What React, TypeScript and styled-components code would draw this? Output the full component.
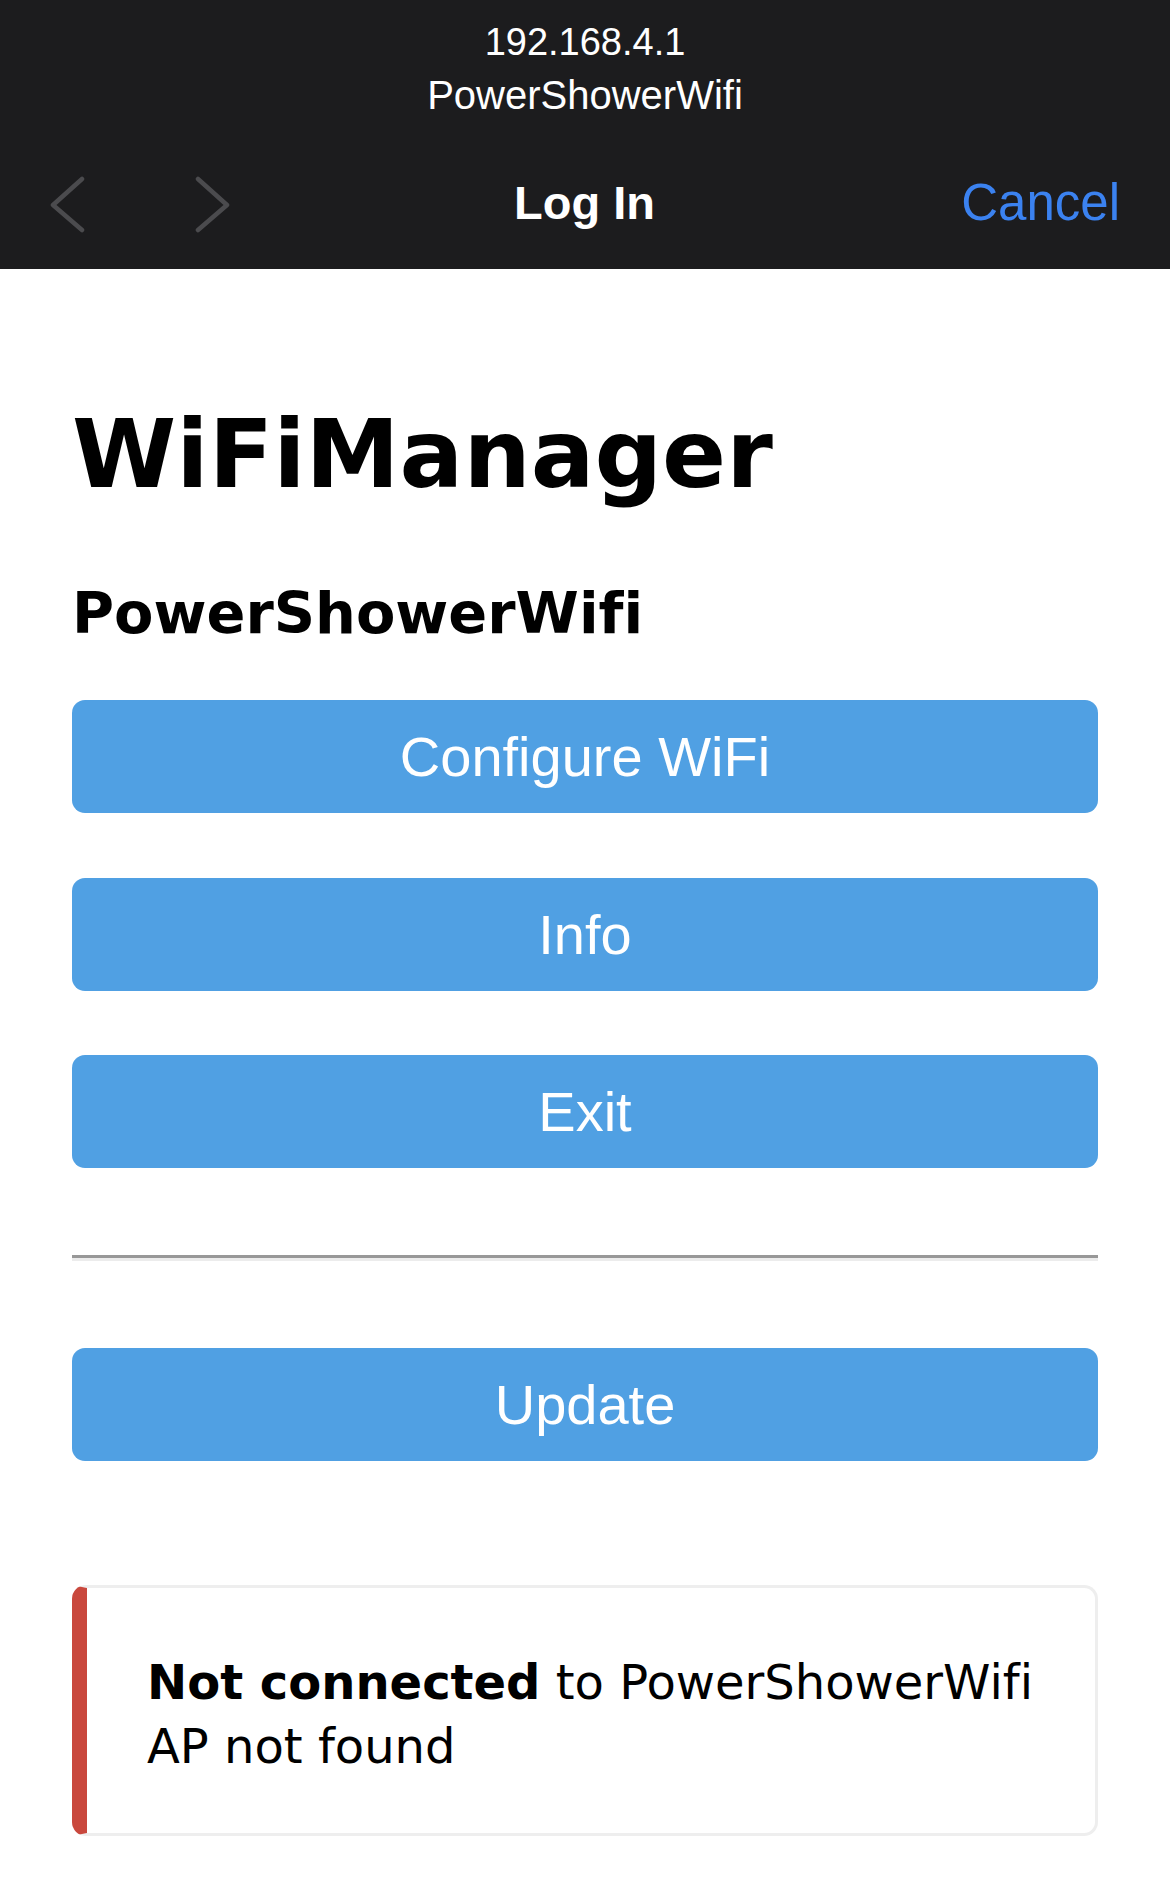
import React from "react";
import styled, { createGlobalStyle } from "styled-components";

const GlobalStyle = createGlobalStyle`
  html, body {
    margin: 0;
    padding: 0;
    background: #ffffff;
  }
  body {
    font-family: "DejaVu Sans", Verdana, sans-serif;
    color: #000;
    font-variant-ligatures: none;
    font-feature-settings: "liga" 0, "clig" 0;
  }
`;

const Page = styled.div`
  min-height: 1878px;
  background: #fff;
  display: flex;
  flex-direction: column;
`;

const Header = styled.header`
  background: #1c1c1e;
  height: 269px;
  box-sizing: border-box;
  padding-top: 19px;
  display: flex;
  flex-direction: column;
  font-family: "Liberation Sans", Arial, sans-serif;
  color: #fff;
`;

const AddressLine = styled.div<{ $size: number; $lh: number }>`
  text-align: center;
  font-size: ${(p) => p.$size}px;
  line-height: ${(p) => p.$lh}px;
  color: #ffffff;
`;

const NavRow = styled.div`
  margin-top: 22px;
  height: 110px;
  display: grid;
  grid-template-columns: 1fr auto 1fr;
  align-items: center;
  padding: 0 50px 0 49px;
`;

const NavArrows = styled.div`
  display: flex;
  align-items: center;
  gap: 108px;
  padding-top: 4px;
`;

const NavTitle = styled.div`
  font-size: 47px;
  font-weight: 700;
  color: #fff;
`;

const CancelLink = styled.div`
  justify-self: end;
  font-size: 51px;
  color: #3b82f0;
`;

const Wrap = styled.main`
  padding: 0 72px;
  display: flex;
  flex-direction: column;
`;

const Title = styled.h1`
  margin: 129px 0 0;
  font-size: 94.5px;
  line-height: 112px;
  font-weight: 700;
`;

const Subtitle = styled.h3`
  margin: 71px 0 0;
  font-size: 57.4px;
  line-height: 66px;
  font-weight: 700;
`;

const Button = styled.button<{ $mt: number }>`
  margin-top: ${(p) => p.$mt}px;
  width: 100%;
  height: 113px;
  border: 0;
  border-radius: 13px;
  background: #50a0e3;
  color: #fff;
  font-family: "Liberation Sans", Arial, sans-serif;
  font-size: 56px;
  line-height: 113px;
  padding: 0;
  cursor: pointer;
`;

const Rule = styled.hr`
  margin: 87px 0 0;
  height: 0;
  border: 0;
  border-top: 3px solid #989898;
  border-bottom: 3px solid #ececec;
`;

const Message = styled.div`
  margin-top: 124px;
  border: 3px solid #eeeeee;
  border-left: 15px solid #c9483d;
  border-radius: 14px;
  padding: 62px 60px 55px 60px;
  font-size: 48px;
  line-height: 64px;
`;

const Strong = styled.strong`
  font-weight: 700;
`;

const Chevron = ({ dir }: { dir: "left" | "right" }) => (
  <svg width="37" height="57" viewBox="0 0 37 57" fill="none">
    <path
      d={dir === "left" ? "M33 3 L4 29 L33 54" : "M4 3 L33 29 L4 54"}
      stroke="#4b4b4e"
      strokeWidth="4.5"
      strokeLinecap="round"
      strokeLinejoin="round"
    />
  </svg>
);

export default function App() {
  return (
    <Page>
      <GlobalStyle />
      <Header>
        <AddressLine $size={38} $lh={46}>192.168.4.1</AddressLine>
        <AddressLine $size={40} $lh={60}>PowerShowerWifi</AddressLine>
        <NavRow>
          <NavArrows>
            <Chevron dir="left" />
            <Chevron dir="right" />
          </NavArrows>
          <NavTitle>Log In</NavTitle>
          <CancelLink>Cancel</CancelLink>
        </NavRow>
      </Header>
      <Wrap>
        <Title>WiFiManager</Title>
        <Subtitle>PowerShowerWifi</Subtitle>
        <Button $mt={53}>Configure WiFi</Button>
        <Button $mt={65}>Info</Button>
        <Button $mt={64}>Exit</Button>
        <Rule />
        <Button $mt={87}>Update</Button>
        <Message>
          <Strong>Not connected</Strong> to PowerShowerWifi
          <br />
          AP not found
        </Message>
      </Wrap>
    </Page>
  );
}
